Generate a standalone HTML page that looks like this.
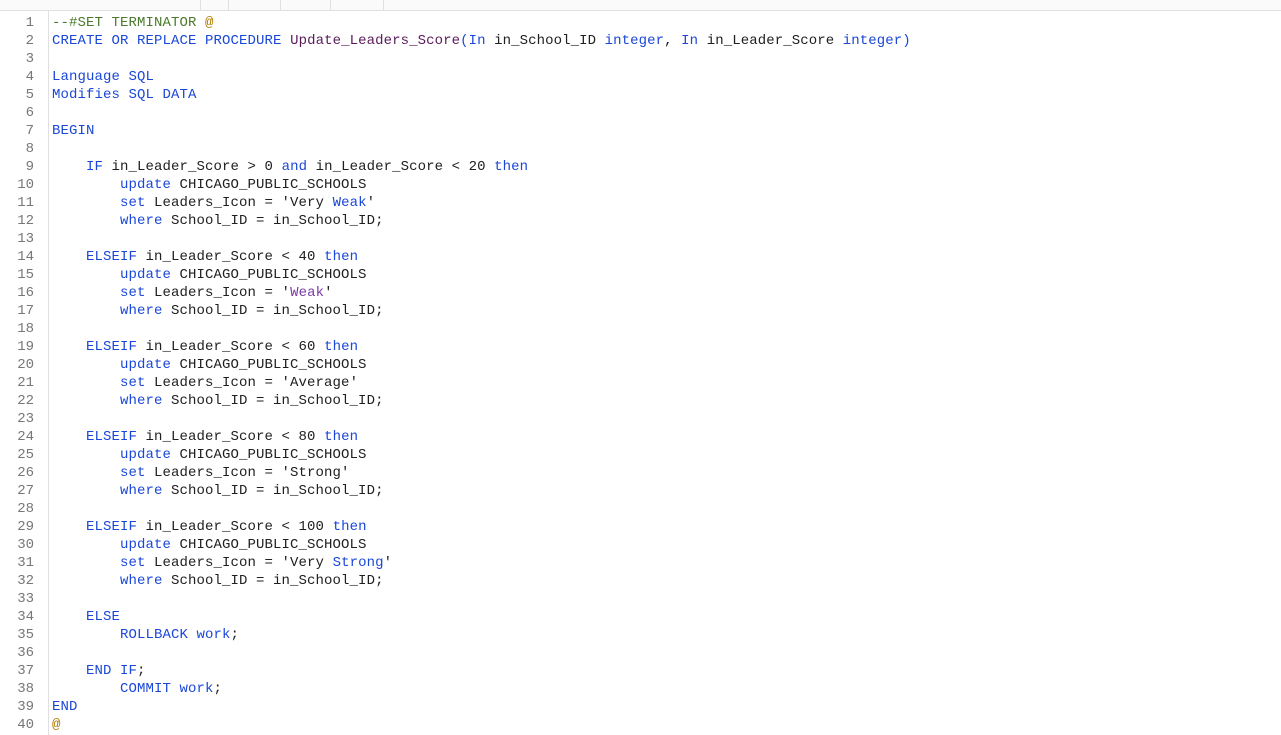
<!DOCTYPE html>
<html><head><style>
body{margin:0;width:1281px;height:735px;background:#fff;overflow:hidden;font-family:"Liberation Mono",monospace;}
.top{position:absolute;left:0;top:0;width:1281px;height:10px;border-bottom:1px solid #e0e0e0;background:#fafafa;}
.top i{position:absolute;top:0;height:10px;border-left:1px solid #e0e0e0;}
.gut{position:absolute;left:48px;top:11px;width:1px;height:724px;background:#e0e0e0;}
.ln{position:absolute;left:0;width:34px;text-align:right;color:#777;font-size:14px;}
.cd{position:absolute;left:52px;color:#202020;font-size:14px;letter-spacing:0.1px;white-space:pre;}
.k{color:#1a47d8}.c{color:#4a7a2a}.s{color:#7a3aa8}.a{color:#b07a00}.p{color:#5a1a5a}
</style></head><body>
<div class="top"><i style="left:200px"></i><i style="left:228px"></i><i style="left:280px"></i><i style="left:330px"></i><i style="left:383px"></i></div>
<div class="gut"></div>
<div id="w"></div>
<script>
var L=[
'<span class="c">--#SET TERMINATOR </span><span class="a">@</span>',
'<span class="k">CREATE OR REPLACE PROCEDURE</span> <span class="p">Update_Leaders_Score</span><span class="k">(In</span> in_School_ID <span class="k">integer</span>, <span class="k">In</span> in_Leader_Score <span class="k">integer)</span>',
'',
'<span class="k">Language SQL</span>',
'<span class="k">Modifies SQL DATA</span>',
'',
'<span class="k">BEGIN</span>',
'',
'    <span class="k">IF</span> in_Leader_Score &gt; 0 <span class="k">and</span> in_Leader_Score &lt; 20 <span class="k">then</span>',
'        <span class="k">update</span> CHICAGO_PUBLIC_SCHOOLS',
'        <span class="k">set</span> Leaders_Icon = \'Very <span class="k">Weak</span>\'',
'        <span class="k">where</span> School_ID = in_School_ID;',
''];
var B=[['40',"'<span class=\"s\">Weak</span>'"],['60',"'Average'"],['80',"'Strong'"],['100',"'Very <span class=\"k\">Strong</span>'"]];
B.forEach(function(b){L.push('    <span class="k">ELSEIF</span> in_Leader_Score &lt; '+b[0]+' <span class="k">then</span>','        <span class="k">update</span> CHICAGO_PUBLIC_SCHOOLS','        <span class="k">set</span> Leaders_Icon = '+b[1],'        <span class="k">where</span> School_ID = in_School_ID;','');});
L.push('    <span class="k">ELSE</span>','        <span class="k">ROLLBACK work</span>;','','    <span class="k">END IF</span>;','        <span class="k">COMMIT work</span>;','<span class="k">END</span>','<span class="a">@</span>');
var h='';
for(var i=0;i<L.length;i++){var t=15+i*18;h+='<div class="ln" style="top:'+t+'px">'+(i+1)+'</div><div class="cd" style="top:'+t+'px">'+L[i]+'</div>';}
document.getElementById('w').innerHTML=h;
</script>
</body></html>
